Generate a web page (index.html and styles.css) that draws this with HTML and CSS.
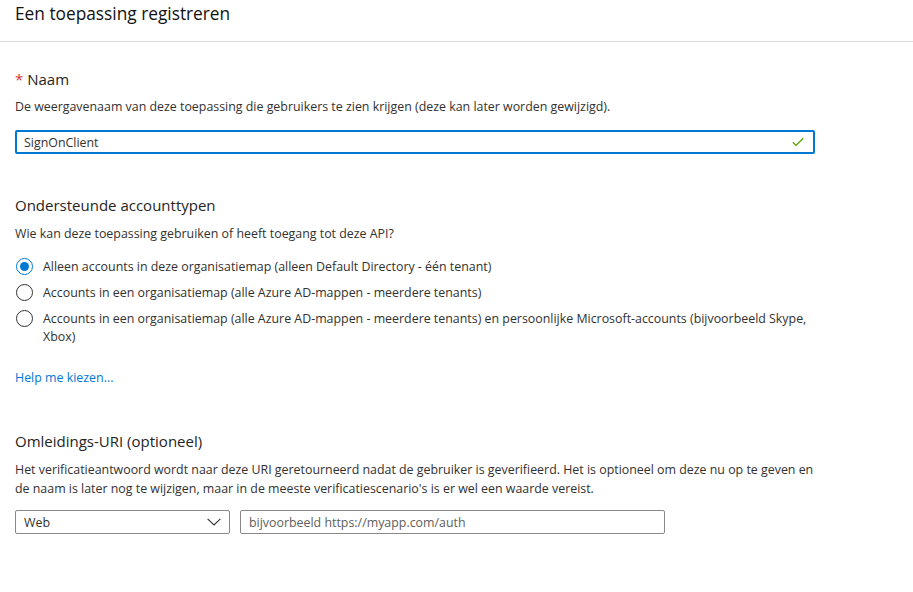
FILE: index.html
```html
<!DOCTYPE html>
<html lang="nl">
<head>
<meta charset="utf-8">
<title>Een toepassing registreren</title>
<link rel="stylesheet" href="styles.css">
</head>
<body>
<header class="page-header">
  <h1 class="page-title">Een toepassing registreren</h1>
</header>
<main class="content">
  <section class="section section-name">
    <h2 class="section-title"><span class="required">*</span> Naam</h2>
    <p class="desc">De weergavenaam van deze toepassing die gebruikers te zien krijgen (deze kan later worden gewijzigd).</p>
    <div class="text-input focused">
      <span class="input-value">SignOnClient</span>
      <svg class="check" width="12" height="10" viewBox="0 0 12 10"><path d="M0.8 5.2 L4 8.4 L11.2 1.2" fill="none" stroke="#57a300" stroke-width="1.3"/></svg>
    </div>
  </section>

  <section class="section section-accounts">
    <h2 class="section-title">Ondersteunde accounttypen</h2>
    <p class="desc">Wie kan deze toepassing gebruiken of heeft toegang tot deze API?</p>
    <div class="radio-group">
      <div class="radio-row">
        <span class="radio checked"></span>
        <span class="radio-label">Alleen accounts in deze organisatiemap (alleen Default Directory - één tenant)</span>
      </div>
      <div class="radio-row">
        <span class="radio"></span>
        <span class="radio-label">Accounts in een organisatiemap (alle Azure AD-mappen - meerdere tenants)</span>
      </div>
      <div class="radio-row">
        <span class="radio"></span>
        <span class="radio-label">Accounts in een organisatiemap (alle Azure AD-mappen - meerdere tenants) en persoonlijke Microsoft-accounts (bijvoorbeeld Skype, Xbox)</span>
      </div>
    </div>
    <a class="help-link" href="#">Help me kiezen...</a>
  </section>

  <section class="section section-uri">
    <h2 class="section-title">Omleidings-URI (optioneel)</h2>
    <p class="desc">Het verificatieantwoord wordt naar deze URI geretourneerd nadat de gebruiker is geverifieerd. Het is optioneel om deze nu op te geven en de naam is later nog te wijzigen, maar in de meeste verificatiescenario's is er wel een waarde vereist.</p>
    <div class="uri-row">
      <div class="select">
        <span class="select-value">Web</span>
        <svg class="chevron" width="14" height="8" viewBox="0 0 14 8"><path d="M0.6 0.8 L7 7 L13.4 0.8" fill="none" stroke="#323130" stroke-width="1.1"/></svg>
      </div>
      <div class="text-input uri-input">
        <span class="placeholder">bijvoorbeeld https://myapp.com/auth</span>
      </div>
    </div>
  </section>
</main>
</body>
</html>
```

FILE: styles.css
```css
* { box-sizing: border-box; }
html, body { margin: 0; padding: 0; background: #fff; }
body {
  font-family: "Open Sans", "Noto Sans", "Liberation Sans", sans-serif;
  color: #323130;
  font-size: 12.4px;
  width: 913px;
  height: 592px;
  overflow: hidden;
}
.page-header {
  height: 42px;
  border-bottom: 1px solid #dcdcdc;
  padding: 2px 15px 0;
}
.page-title {
  margin: 0;
  font-size: 17.3px;
  font-weight: 400;
  line-height: 24px;
  color: #111;
}
.content {
  padding: 0 15px;
  width: 830px;
}
.section-title {
  margin: 0;
  font-size: 15px;
  font-weight: 400;
  line-height: 20px;
  color: #252423;
}
.required { color: #d13438; }
.desc {
  margin: 0;
  line-height: 19px;
  color: #323130;
}
.section-name { padding-top: 27px; }
.section-name .desc { margin-top: 8px; }
.text-input {
  display: flex;
  align-items: center;
  height: 24px;
  border: 1px solid #8a8886;
  border-radius: 2px;
  padding: 0 8px;
}
.text-input.focused {
  margin-top: 14px;
  border: 2px solid #0078d4;
  padding: 0 9px 0 7px;
  justify-content: space-between;
}
.input-value { color: #323130; }
.section-accounts { padding-top: 41px; }
.section-accounts .desc { margin-top: 9px; }
.radio-group {
  margin-top: 15px;
  display: flex;
  flex-direction: column;
  gap: 8px;
}
.radio-row {
  display: flex;
  align-items: flex-start;
  line-height: 18px;
}
.radio {
  flex: none;
  width: 17px;
  height: 17px;
  border: 1px solid #323130;
  border-radius: 50%;
  margin: 0 10px 0 1px;
  position: relative;
}
.radio.checked { border-color: #0078d4; }
.radio.checked::after {
  content: "";
  position: absolute;
  left: 3px; top: 3px;
  width: 9px; height: 9px;
  border-radius: 50%;
  background: #0078d4;
}
.radio-label { color: #323130; }
.help-link {
  display: inline-block;
  margin-top: 23px;
  color: #0078d4;
  text-decoration: none;
  line-height: 18px;
}
.section-uri { padding-top: 44px; }
.section-uri .desc { margin-top: 9px; }
.uri-row {
  margin-top: 12px;
  display: flex;
  gap: 10px;
}
.select {
  width: 215px;
  height: 24px;
  border: 1px solid #8a8886;
  border-radius: 2px;
  display: flex;
  align-items: center;
  justify-content: space-between;
  padding: 0 8px 0 8px;
}
.uri-input { width: 425px; }
.placeholder { color: #605e5c; }
```
